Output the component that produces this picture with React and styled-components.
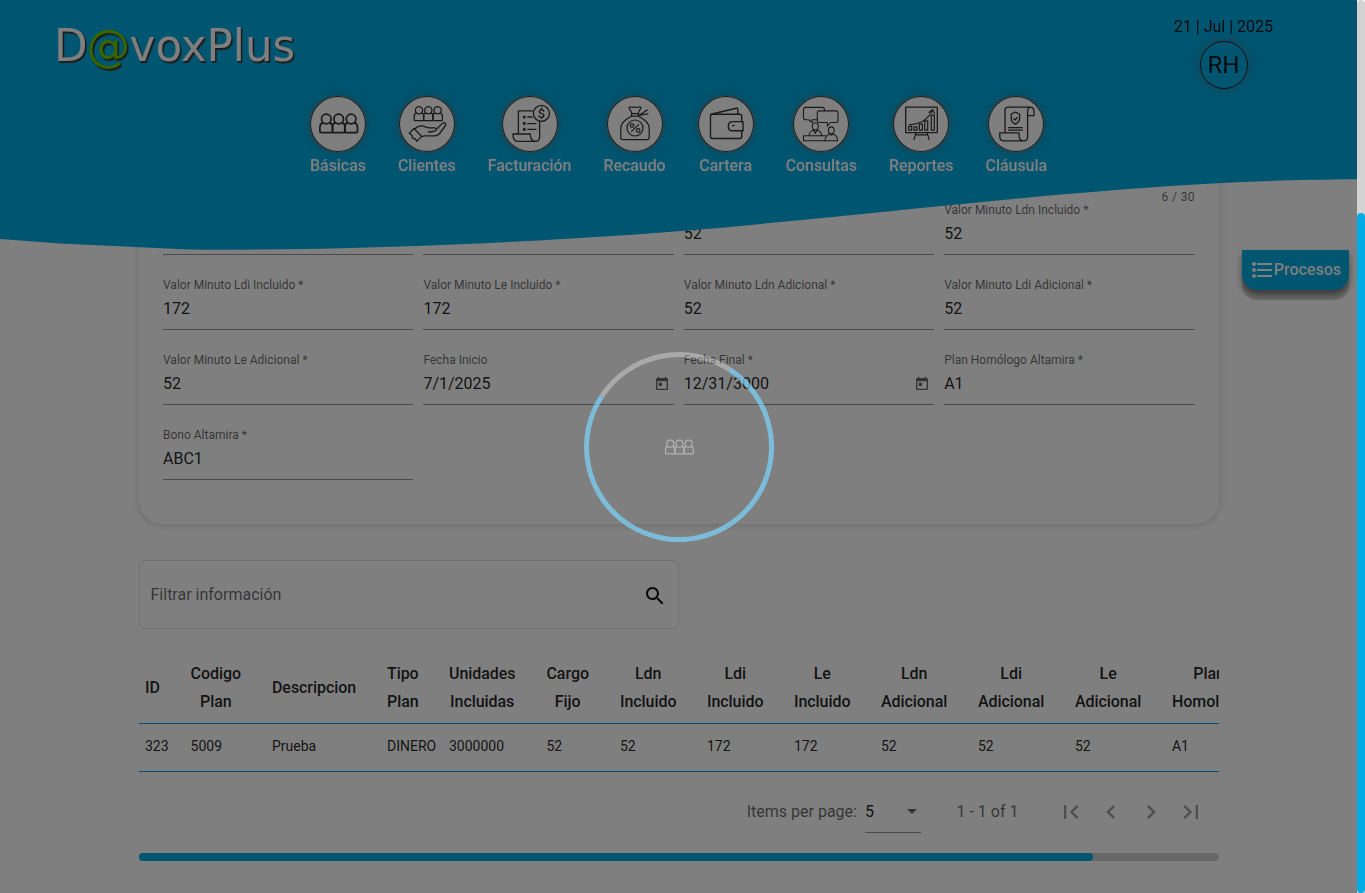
import React from 'react';
import styled, { createGlobalStyle } from 'styled-components';

const BLUE = '#00aae0';

const GlobalStyle = createGlobalStyle`
  *, *::before, *::after { box-sizing: border-box; }
  html, body { margin: 0; padding: 0; height: 893px; overflow: hidden; }
  body { background: #fff; font-family: Roboto, sans-serif; font-size: 16px; color: rgba(0, 0, 0, 0.87); }
`;

const Shell = styled.div`
  display: flex;
  height: 893px;
  overflow: hidden;
`;

const Main = styled.main`
  flex: 1;
  min-width: 0;
  padding: 150px 138px 0 139px;
`;

const PageScroll = styled.div`
  position: relative;
  z-index: 30;
  width: 8px;
  height: 893px;
  background: #d3d3d3;
  border-radius: 4px 4px 0 0;
  padding-top: 213px;
`;

const PageThumb = styled.div`
  height: 680px;
  background: #00abe6;
  border-radius: 4px;
`;

/* Header */
const Header = styled.header`
  position: fixed;
  top: 0;
  left: 0;
  z-index: 10;
  width: 1357px;
  height: 250px;
`;

const Wave = styled.svg`
  position: absolute;
  inset: 0;
  display: block;
`;

const HeaderTop = styled.div`
  position: relative;
  display: flex;
  justify-content: space-between;
  height: 96px;
  padding: 17px 84px 0 54px;
`;

const Logo = styled.div`
  font: 43.6px/58px 'DejaVu Sans', sans-serif;
  color: #fff;
  text-shadow: 1px 1px 1px #333, 1.5px 1.5px 1px #444;
`;

const LogoAt = styled.span`
  margin: 0 -0.6px 0 -1px;
  color: #6ccc00;
`;

const User = styled.div`
  display: flex;
  flex-direction: column;
  align-items: center;
  line-height: 20px;
`;

const Avatar = styled.div`
  display: flex;
  align-items: center;
  justify-content: center;
  width: 48px;
  height: 48px;
  margin: 4px -1px 0 0;
  padding-right: 1px;
  border: 1px solid #222;
  border-radius: 50%;
  font-size: 24px;
  box-shadow: 0 0 8px rgba(100, 100, 100, 0.6);
`;

const Nav = styled.nav`
  position: relative;
  display: flex;
  justify-content: center;
  gap: 32px;
`;

const NavItem = styled.a`
  display: flex;
  flex-direction: column;
  align-items: center;
  color: #fff;
  font-weight: 500;
  line-height: 20px;
  letter-spacing: -0.05px;
`;

const NavCircle = styled.span`
  width: 56px;
  height: 56px;
  margin-bottom: 4px;
  border-radius: 50%;
  background: #fff;
  box-shadow: inset 0 0 0 1px #333, 0 0 8px rgba(100, 100, 100, 0.6);
`;

const Glyph = styled.svg`
  display: block;
  width: 56px;
  height: 56px;
  fill: none;
  stroke: #333;
  stroke-width: ${(p) => p.$w || 1};
  stroke-linecap: round;
  stroke-linejoin: round;
`;

/* Form */
const Card = styled.section`
  height: 374px;
  padding: 37px 24px 0;
  border-radius: 24px;
  box-shadow: 0 1px 8px rgba(0, 0, 0, 0.16);
`;

const Counter = styled.div`
  height: 14px;
  line-height: 20px;
  font-size: 12px;
  letter-spacing: 0.4px;
  text-align: right;
  color: rgba(0, 0, 0, 0.6);
`;

const FieldGrid = styled.div`
  display: grid;
  grid-template-columns: repeat(4, 250.4px);
  grid-auto-rows: 75px;
  column-gap: 10px;
  margin-top: -21px;
`;

const Field = styled.div`
  display: flex;
  flex-direction: column;
  height: 75px;
  padding-top: 21.5px;
  border-bottom: 1px solid rgba(0, 0, 0, 0.42);
`;

const Label = styled.label`
  font-size: 12px;
  line-height: 17px;
  min-height: 17.5px;
  color: rgba(0, 0, 0, 0.6);
`;

const Value = styled.div`
  display: flex;
  align-items: center;
  justify-content: space-between;
  height: 29px;
  padding-right: 4px;
`;

const Calendar = styled.svg`
  width: 16px;
  height: 16px;
  fill: rgba(0, 0, 0, 0.6);
`;

/* Filter */
const Filter = styled.div`
  display: flex;
  align-items: center;
  justify-content: space-between;
  width: 540px;
  height: 69px;
  margin-top: 36px;
  padding: 0 11.5px 0 10.5px;
  border: 1px solid rgba(0, 0, 0, 0.12);
  border-radius: 5px;
  color: rgba(0, 0, 0, 0.6);
`;

const SearchIcon = styled.svg`
  width: 24px;
  height: 24px;
  margin-top: 2px;
  fill: #111;
`;

/* Table */
const TableScroll = styled.div`
  width: 1080px;
  margin-top: 24px;
  overflow: hidden;
`;

const Table = styled.table`
  width: 1222px;
  table-layout: fixed;
  border-collapse: collapse;
`;

const HeadCell = styled.th`
  height: 70px;
  padding: 1px 6px 0;
  border-bottom: 1px solid ${BLUE};
  text-align: left;
  font-weight: 500;
  line-height: 28px;
  letter-spacing: -0.06px;
`;

const HeadText = styled.span`
  display: inline-block;
  width: min-content;
  text-align: center;
`;

const Cell = styled.td`
  height: 48px;
  padding: 0 0 2px 6px;
  border-bottom: 1px solid ${BLUE};
  font-size: 14px;
  white-space: nowrap;
`;

const Paginator = styled.div`
  display: flex;
  align-items: center;
  justify-content: flex-end;
  width: 1080px;
  height: 81px;
  padding: 0 8px 2px 0;
  color: rgba(0, 0, 0, 0.6);
`;

const PageSize = styled.div`
  display: flex;
  align-items: center;
  justify-content: space-between;
  width: 56px;
  height: 43px;
  margin: 1px 35.5px 0 8px;
  border-bottom: 1px solid rgba(0, 0, 0, 0.42);
  color: rgba(0, 0, 0, 0.87);
`;

const Caret = styled.span`
  margin-right: 4px;
  border: 5px solid transparent;
  border-top-color: rgba(0, 0, 0, 0.6);
  border-bottom: 0;
`;

const Range = styled.span`
  margin-right: 32.6px;
`;

const PageButton = styled.span`
  display: flex;
  align-items: center;
  justify-content: center;
  width: 40px;
  height: 40px;
  padding-top: 1px;

  svg {
    width: 28px;
    height: 28px;
    fill: rgba(0, 0, 0, 0.38);
  }
`;

const TableTrack = styled.div`
  width: 1080px;
  height: 8px;
  border-radius: 4px;
  background: #d0d0d0;
`;

const TableThumb = styled.div`
  width: 954px;
  height: 8px;
  border-radius: 4px;
  background: ${BLUE};
`;

/* Floating pieces */
const Processes = styled.button`
  position: fixed;
  left: 1242px;
  top: 250px;
  z-index: 9;
  display: flex;
  align-items: center;
  gap: 2px;
  width: 107px;
  height: 40px;
  padding: 0 0 1px 10px;
  border: 0;
  border-radius: 0 0 15px 15px;
  background: ${BLUE};
  color: #fff;
  font: 500 16px Roboto, sans-serif;
  box-shadow: 0 10px 1px 0 rgba(0, 0, 0, 0.16), 0 5px 7px rgba(0, 0, 0, 0.45);
`;

const Overlay = styled.div`
  position: fixed;
  inset: 0 8px 0 0;
  z-index: 20;
  display: flex;
  align-items: center;
  justify-content: center;
  background: rgba(0, 0, 0, 0.5);
`;

const Spinner = styled.svg`
  width: 190px;
  height: 190px;
  fill: none;
`;

const People = () => (
  <>
    {[16.3, 28.7, 41.1].map((x) => (
      <g key={x}>
        <circle cx={x} cy="23" r="4.8" />
        <path d={`M${x - 3.4} 26.6C${x - 5.8} 27.4 ${x - 6.4} 29 ${x - 6.4} 31.5V35.5Q${x - 6.4} 36.7 ${x - 5.2} 36.7H${x + 5.2}Q${x + 6.4} 36.7 ${x + 6.4} 35.5V31.5C${x + 6.4} 29 ${x + 5.8} 27.4 ${x + 3.4} 26.6`} />
      </g>
    ))}
  </>
);

const items = [
  { name: 'Básicas', w: 1.7, icon: <People /> },
  {
    name: 'Clientes',
    w: 1.3,
    icon: (
      <>
        <g transform="translate(7.8 -3) scale(.75)" strokeWidth="1.7"><People /></g>
        <path d="M10.3 37.3L15 32.5L22.6 40.4L17.8 45.4L16.5 43L13.5 42.2L13 39.4Z" />
        <path d="M15.6 33C19 29.5 23 29 27 31.2L30 31.8H35.5C38 31.8 38 34.2 36 34.8L31 36H29.5M37.4 33.2L43.4 27.4C45.8 25.6 47.8 27.6 46.2 30L40.2 38C39 39.4 37.4 39.8 35.5 39.8H25.5L22.6 40.6" />
      </>
    ),
  },
  {
    name: 'Facturación',
    w: 1.3,
    icon: (
      <>
        <path d="M31 14.8H16.4V38M37.6 25.6V41C37.6 44 36 45.4 33.6 45.4C30 45.4 28.4 43 28.2 38H11C11 43 12.6 45.4 15.6 45.4H33.6" />
        <circle cx="39.4" cy="17.4" r="8" />
        <text x="39.4" y="22" fontSize="13" fontWeight="500" textAnchor="middle" fill="#333" stroke="none">$</text>
        <circle cx="22.3" cy="21" r=".9" /><circle cx="22.3" cy="27.4" r=".9" /><circle cx="22.3" cy="33.4" r=".9" />
        <path d="M25.8 21H30M25.8 27.6H34M25.8 33.4H34" />
      </>
    ),
  },
  {
    name: 'Recaudo',
    w: 1.2,
    icon: (
      <>
        <path d="M24.5 20.2C19 23 13.8 26.5 13.8 32V41.5Q13.8 43.6 16 43.6H40Q42.2 43.6 42.2 41.5V32C42.2 26.5 37 23 31.5 20.2Z" />
        <path d="M24.5 20.2V17.6H31.5V20.2M24.8 17.6C24.6 15 22.4 14 22 11.4C24 10 25 12.2 26.4 11.2C28 10 29 12.4 30.4 11.2C32 10.4 32.8 11 34 11.4C33.4 14 31.4 15 31.3 17.6M32 19C36 19.4 37.4 17.8 41 17.9M32 19C36 18 37 15 40.4 14.2" />
        <circle cx="28" cy="32" r="8" />
        <circle cx="25" cy="29.6" r="1.8" /><circle cx="31.2" cy="34.5" r="1.8" />
        <path d="M31.6 28.6L24.6 35.4" />
      </>
    ),
  },
  {
    name: 'Cartera',
    w: 1.4,
    icon: (
      <>
        <path d="M43.7 25.6V20Q43.7 18.2 41.9 18.2H14.2Q12.5 18.2 12.5 20V40.6Q12.5 42.5 14.4 42.5H41.8Q43.7 42.5 43.7 40.6V34.8" />
        <path d="M13 18.2L38.4 12.2Q39.8 12 39.8 13.4V18.2" />
        <path d="M45 25.6V34.8H34.6C28.9 34.8 28.9 25.6 34.6 25.6Z" />
        <path d="M34.6 29.6H36" />
      </>
    ),
  },
  {
    name: 'Consultas',
    w: 1.1,
    icon: (
      <>
        <path d="M31.4 14.8V13.4Q31.4 11.4 29.4 11.4H12.6Q10.5 11.4 10.5 13.4V21.5Q10.5 23.7 12.6 23.7H15.6L19 26.4V23.7H24.2" />
        <path d="M26.2 14.9H43Q45 14.9 45 16.9V24.6Q45 26.5 43 26.5H37.5L34.4 30V26.5H26.2Q24.3 26.5 24.3 24.6V16.9Q24.3 14.9 26.2 14.9Z" />
        <ellipse cx="22.3" cy="30.4" rx="3" ry="3.6" /><path d="M20.5 33.6L22.3 37.4L24.2 33.6M16.1 39.6C16.2 36 17.5 35.2 20.3 34.2M28.7 39.6C28.5 36 27 35.2 24.4 34.2" />
        <ellipse cx="38.3" cy="34.3" rx="2.9" ry="3.4" /><path d="M32 44.7C32.2 40.6 33.5 39.2 36.4 38L38.3 39.2L40.3 38C43.2 39.2 44.4 40.6 44.6 44.7Z" />
        <path d="M32.5 39.8H10.5V44.7H32" />
      </>
    ),
  },
  {
    name: 'Reportes',
    w: 1.2,
    icon: (
      <>
        <rect x="12.7" y="11.2" width="31.6" height="25.4" strokeWidth="1.3" />
        <path d="M15.7 34.2V30.4H18.7V34.2ZM21 34.2V30.8H24V34.2ZM26.4 34.2V28.2H29.4V34.2ZM31.7 34.2V24.9H34.7V34.2ZM38.3 34.2V19.4H41.3V34.2Z" />
        <path d="M16.6 28.6C25 29 34.5 24.5 39.4 14.4M35.8 16.4L39.8 13.6L41.4 18" />
        <path d="M22.9 36.8L21 43.6M34.2 36.8L36.2 43.6M22.6 38.8H34.6" />
      </>
    ),
  },
  {
    name: 'Cláusula',
    w: 1.3,
    icon: (
      <>
        <path d="M17 36.6V14.2C17 12 18.2 11.2 20.2 11.2H42.2C45 11.2 46 13.2 46 16V19.6H40.1M42.2 11.2C40 11.6 39.6 13.6 39.6 16V41C39.6 43.4 38.2 44.8 36 44.8C33 44.8 31.6 43.4 31.2 40.8L31 36.8H11.8V40.6C11.8 43.4 13 44.8 15.6 44.8H36" />
        <path d="M27.3 16.2L31.6 18V22.5C31.6 25 30 26.8 27.3 28.2C24.6 26.8 23.2 25 23.2 22.5V18Z M25.6 22.6L27 24L29.2 21.4M20.6 31.7H34.2M20.6 34.2H34.2" />
      </>
    ),
  },
];

const fields = [
  ['', ''],
  ['', ''],
  ['Valor Minuto Le Incluido *', '52'],
  ['Valor Minuto Ldn Incluido *', '52'],
  ['Valor Minuto Ldi Incluido *', '172'],
  ['Valor Minuto Le Incluido *', '172'],
  ['Valor Minuto Ldn Adicional *', '52'],
  ['Valor Minuto Ldi Adicional *', '52'],
  ['Valor Minuto Le Adicional *', '52'],
  ['Fecha Inicio', '7/1/2025', true],
  ['Fecha Final *', '12/31/3000', true],
  ['Plan Homólogo Altamira *', 'A1'],
  ['Bono Altamira *', 'ABC1'],
];

const columns = [
  [45.6, 'ID', '323'],
  [81.4, 'Codigo Plan', '5009'],
  [115, 'Descripcion', 'Prueba'],
  [62, 'Tipo Plan', 'DINERO'],
  [97.5, 'Unidades Incluidas', '3000000'],
  [73.5, 'Cargo Fijo', '52'],
  [87, 'Ldn Incluido', '52'],
  [87, 'Ldi Incluido', '172'],
  [87, 'Le Incluido', '172'],
  [97, 'Ldn Adicional', '52'],
  [97, 'Ldi Adicional', '52'],
  [97, 'Le Adicional', '52'],
  [195, 'Plan Homologo', 'A1'],
];

const pageIcons = [
  'M18.41 16.59L13.82 12l4.59-4.59L17 6l-6 6 6 6zM6 6h2v12H6z',
  'M15.41 7.41L14 6l-6 6 6 6 1.41-1.41L10.83 12z',
  'M10 6L8.59 7.41 13.17 12l-4.58 4.59L10 18l6-6z',
  'M5.59 7.41L10.18 12l-4.59 4.59L7 18l6-6-6-6zM16 6h2v12h-2z',
];

export default function App() {
  return (
    <>
      <GlobalStyle />
      <Header>
        <Wave width="1357" height="250" viewBox="0 0 1357 250">
          <path fill={BLUE} d="M0 0H1357V179.3C1300 179.6 1250 181.5 1222 183C1050 192 900 212 700 229.5C560 241 380 249.8 205 249.8Q190 249.8 178 249L60 243.5L0 239Z" />
        </Wave>
        <HeaderTop>
          <Logo>D<LogoAt>@</LogoAt>voxPlus</Logo>
          <User>
            21 | Jul | 2025
            <Avatar>RH</Avatar>
          </User>
        </HeaderTop>
        <Nav>
          {items.map((item) => (
            <NavItem key={item.name}>
              <NavCircle><Glyph viewBox="0 0 56 56" $w={item.w}>{item.icon}</Glyph></NavCircle>
              {item.name}
            </NavItem>
          ))}
        </Nav>
      </Header>
      <Shell>
        <Main>
          <Card>
            <Counter>6 / 30</Counter>
            <FieldGrid>
              {fields.map(([label, value, date], i) => (
                <Field key={i}>
                  <Label>{label}</Label>
                  <Value>
                    {value}
                    {date && (
                      <Calendar viewBox="0 0 24 24">
                        <path d="M19 3h-1V1h-2v2H8V1H6v2H5c-1.11 0-1.99.9-1.99 2L3 19c0 1.1.89 2 2 2h14c1.1 0 2-.9 2-2V5c0-1.1-.9-2-2-2zm0 16H5V8h14v11zM7 10h5v5H7z" />
                      </Calendar>
                    )}
                  </Value>
                </Field>
              ))}
            </FieldGrid>
          </Card>
          <Filter>
            Filtrar información
            <SearchIcon viewBox="0 0 24 24">
              <path d="M15.5 14h-.79l-.28-.27C15.41 12.59 16 11.11 16 9.5 16 5.91 13.09 3 9.5 3S3 5.91 3 9.5 5.91 16 9.5 16c1.61 0 3.09-.59 4.23-1.57l.27.28v.79l5 4.99L20.49 19l-4.99-5zm-6 0C7.01 14 5 11.99 5 9.5S7.01 5 9.5 5 14 7.01 14 9.5 11.99 14 9.5 14z" />
            </SearchIcon>
          </Filter>
          <TableScroll>
            <Table>
              <colgroup>{columns.map(([w], i) => <col key={i} style={{ width: w }} />)}</colgroup>
              <thead>
                <tr>{columns.map(([, head], i) => <HeadCell key={i}><HeadText>{head}</HeadText></HeadCell>)}</tr>
              </thead>
              <tbody>
                <tr>{columns.map(([, , value], i) => <Cell key={i}>{value}</Cell>)}</tr>
              </tbody>
            </Table>
          </TableScroll>
          <Paginator>
            Items per page:
            <PageSize>5<Caret /></PageSize>
            <Range>1 - 1 of 1</Range>
            {pageIcons.map((d) => <PageButton key={d}><svg viewBox="0 0 24 24"><path d={d} /></svg></PageButton>)}
          </Paginator>
          <TableTrack><TableThumb /></TableTrack>
        </Main>
        <PageScroll><PageThumb /></PageScroll>
      </Shell>
      <Processes>
        <svg width="20" height="16" viewBox="0 0 20 16" fill="#fff">
          <circle cx="2" cy="2" r="2" /><circle cx="2" cy="8" r="2" /><circle cx="2" cy="14" r="2" />
          <path d="M5 1h15v2H5zM5 7h15v2H5zM5 13h15v2H5z" />
        </svg>
        Procesos
      </Processes>
      <Overlay>
        <Spinner viewBox="0 0 190 190">
          <path d="M17.6 44.5A92.5 92.5 0 0 1 145.7 17.7" stroke="#fff" strokeOpacity=".33" strokeWidth="5" />
          <path d="M145.7 17.7A92.5 92.5 0 1 1 17.6 44.5" stroke="#7cd6fe" strokeOpacity=".7" strokeWidth="5" />
          <g transform="translate(74.2 74.7) scale(.74)" stroke="#b4b4b4" strokeWidth="1.5"><People /></g>
        </Spinner>
      </Overlay>
    </>
  );
}
